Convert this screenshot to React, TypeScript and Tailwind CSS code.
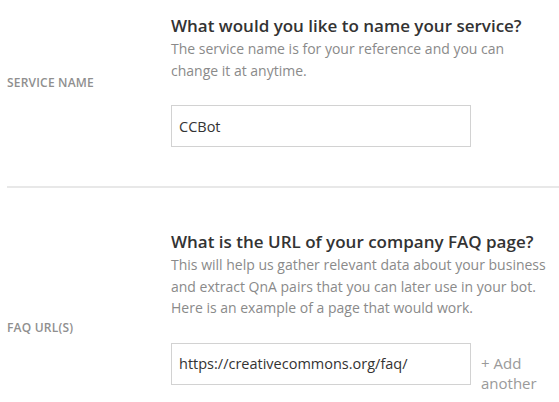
import React from 'react';

interface Field {
  label: string;
  labelTop: string;
  sectionClass: string;
  question: string;
  help: React.ReactNode;
  inputGap: string;
  value: string;
  canAdd?: boolean;
}

const fields: Field[] = [
  {
    label: 'SERVICE NAME',
    labelTop: 'pt-[55px]',
    sectionClass: 'pt-[14px] pb-[39px]',
    question: 'What would you like to name your service?',
    help: (
      <>
        The service name is for your reference and you can
        <br />
        change it at anytime.
      </>
    ),
    inputGap: 'mt-[24px]',
    value: 'CCBot',
  },
  {
    label: 'FAQ URL(S)',
    labelTop: 'pt-[84px]',
    sectionClass: 'pt-[42px] pb-[40px]',
    question: 'What is the URL of your company FAQ page?',
    help: (
      <>
        This will help us gather relevant data about your business
        <br />
        and extract QnA pairs that you can later use in your bot.
        <br />
        Here is an example of a page that would work.
      </>
    ),
    inputGap: 'mt-[24px]',
    value: 'https://creativecommons.org/faq/',
    canAdd: true,
  },
];

function FieldSection({ field }: { field: Field }) {
  const [value, setValue] = React.useState(field.value);

  return (
    <section className={`flex ${field.sectionClass}`}>
      <div className={`w-[164px] shrink-0 ${field.labelTop}`}>
        <span className="text-[12px] leading-[16px] font-semibold text-[#8f8f8f] tracking-[0.2px]">
          {field.label}
        </span>
      </div>
      <div>
        <h2 className="text-[17px] leading-[24px] font-semibold text-[#333333]">
          {field.question}
        </h2>
        <p className="text-[14px] leading-[21.5px] text-[#8a8a8a]">{field.help}</p>
        <div className={`flex items-start ${field.inputGap}`}>
          <input
            value={value}
            onChange={(e) => setValue(e.target.value)}
            className="w-[300px] h-[42px] border border-[#d2d2d2] px-[7px] text-[14.5px] text-[#333333] outline-none"
          />
          {field.canAdd && (
            <button className="ml-[10px] mt-[10px] text-left text-[15px] leading-[20px] text-[#9a9a9a]">
              + Add
              <br />
              another
            </button>
          )}
        </div>
      </div>
    </section>
  );
}

export default function App() {
  return (
    <div className="w-[559px] h-[402px] overflow-hidden bg-white pl-[7px] font-['Open_Sans',sans-serif]">
      <FieldSection field={fields[0]} />
      <div className="h-[2px] bg-[#e8e8e8]" />
      <FieldSection field={fields[1]} />
    </div>
  );
}
